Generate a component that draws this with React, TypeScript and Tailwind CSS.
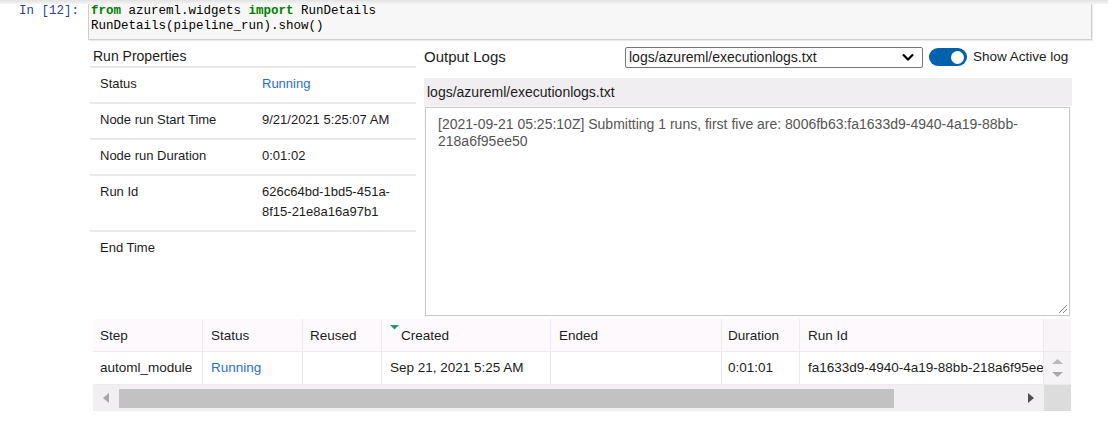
import React from "react";

const cols = [
  { key: "step", w: "w-[110px]", pl: "pl-[7px]" },
  { key: "status", w: "w-[100px]", pl: "pl-[8px]" },
  { key: "reused", w: "w-[79px]", pl: "pl-[7px]" },
  { key: "created", w: "w-[169px]", pl: "pl-[8px]" },
  { key: "ended", w: "w-[171px]", pl: "pl-[8px]" },
  { key: "duration", w: "w-[78px]", pl: "pl-[6px]" },
  { key: "runid", w: "w-[244px]", pl: "pl-[8px]" },
];

function PropRow({ label, children, last }: { label: string; children?: React.ReactNode; last?: boolean }) {
  return (
    <div className={`flex pt-[6px] pb-[8px] leading-[20px] text-[13px] ${last ? "" : "border-b-2 border-[#e9e9e9]"}`}>
      <div className="w-[172px] pl-[10px] shrink-0">{label}</div>
      <div className="flex-1">{children}</div>
    </div>
  );
}

export default function App() {
  return (
    <div className="w-[1108px] h-[436px] bg-white overflow-hidden font-['Liberation_Sans',Arial,sans-serif] text-[#1c1c1c]">
      <div className="h-[4px] bg-linear-to-b from-[#e2e2e2] to-[#f4f4f4]" />
      <div className="flex">
        <div className="w-[88px] shrink-0 pr-[9px] text-right font-['Liberation_Mono','Courier_New',monospace] text-[12.5px] leading-[15px] text-[#303f9f]">
          In [12]:
        </div>
        <div className="flex-1 mr-[16px] h-[36px] bg-[#f7f7f7] border-x border-b border-[#cfcfcf] shadow-[1px_1px_1px_rgba(0,0,0,0.08)] pl-[2px] font-['Liberation_Mono','Courier_New',monospace] text-[12.5px] leading-[15px] text-black">
          <div>
            <span className="text-[#008000] font-bold">from</span> azureml.widgets{" "}
            <span className="text-[#008000] font-bold">import</span> RunDetails
          </div>
          <div>RunDetails(pipeline_run).show()</div>
        </div>
      </div>

      <div className="ml-[90px] w-[982px] mt-[4px]">
        <div className="flex gap-[8px] h-[275px]">
          {/* Left panel */}
          <div className="w-[326px] shrink-0">
            <div className="pt-[2px] leading-[20px] text-[14px] pl-[3px] border-b-2 border-[#e9e9e9]">Run Properties</div>
            <PropRow label="Status">
              <span className="text-[#1f6fde]">Running</span>
            </PropRow>
            <PropRow label="Node run Start Time">9/21/2021 5:25:07 AM</PropRow>
            <PropRow label="Node run Duration">0:01:02</PropRow>
            <PropRow label="Run Id">
              <div>626c64bd-1bd5-451a-</div>
              <div>8f15-21e8a16a97b1</div>
            </PropRow>
            <PropRow label="End Time" last />
          </div>

          {/* Right panel */}
          <div className="w-[648px] shrink-0">
            <div className="h-[26px] flex items-center">
              <div className="w-[201px] shrink-0 text-[15px]">Output Logs</div>
              <div className="w-[298px] h-[21px] border border-[#767676] rounded-[2px] bg-white flex items-center justify-between pl-[3px] pr-[8px] text-[14px]">
                <span>logs/azureml/executionlogs.txt</span>
                <svg width="12" height="8" viewBox="0 0 12 8">
                  <polyline points="1,1.5 6,6.5 11,1.5" fill="none" stroke="#000" strokeWidth="2.2" />
                </svg>
              </div>
              <div className="ml-[6px] w-[38px] h-[18px] rounded-full bg-[#0062ad] flex items-center justify-end pr-[3px]">
                <div className="w-[13px] h-[13px] rounded-full bg-white" />
              </div>
              <div className="ml-[6px] text-[13.5px]">Show Active log</div>
            </div>
            <div className="mt-[8px] h-[28px] bg-[#f0eef0] pl-[3px] leading-[28px] text-[14px]">
              logs/azureml/executionlogs.txt
            </div>
            <div className="mt-[1px] ml-[1px] mr-[2px] h-[209px] border border-[#cacaca] shadow-[0_0_1px_rgba(0,0,0,0.12)] bg-white pl-[12px] pt-[8px] text-[14px] leading-[17px] text-[#555555] flex flex-col">
              <div className="whitespace-nowrap">
                [2021-09-21 05:25:10Z] Submitting 1 runs, first five are: 8006fb63:fa1633d9-4940-4a19-88bb-
              </div>
              <div>218a6f95ee50</div>
              <div className="flex-1" />
              <div className="self-end pr-[1px] pb-[1px]">
                <svg width="11" height="11" viewBox="0 0 11 11">
                  <line x1="10" y1="2" x2="2" y2="10" stroke="#8a8a8a" strokeWidth="1" />
                  <line x1="10" y1="6" x2="6" y2="10" stroke="#8a8a8a" strokeWidth="1" />
                </svg>
              </div>
            </div>
          </div>
        </div>

        {/* Table */}
        <div className="ml-[3px] w-[978px] bg-[#f3f0f3] text-[13.5px]">
          <div className="flex h-[33px] bg-[#fdf9fd] border-b border-[#ede9ed]">
            {cols.map((c, i) => (
              <div key={c.key} className={`${c.w} ${c.pl} shrink-0 border-r border-[#ede9ed] leading-[33px] whitespace-nowrap overflow-hidden flex`}>
                {c.key === "created" ? (
                  <>
                    <div className="self-start mt-[6px] mr-[2px]">
                      <svg width="9" height="5" viewBox="0 0 9 5">
                        <polygon points="0,0 9,0 4.5,4.5" fill="#1b9b6b" />
                      </svg>
                    </div>
                    <span>Created</span>
                  </>
                ) : (
                  <span>{["Step", "Status", "Reused", "Created", "Ended", "Duration", "Run Id"][i]}</span>
                )}
              </div>
            ))}
            <div className="w-[27px] shrink-0 bg-[#f8f4f7]" />
          </div>
          <div className="flex h-[33px] bg-white border-b border-[#ede9ed]">
            {cols.map((c, i) => (
              <div key={c.key} className={`${c.w} ${c.pl} shrink-0 border-r border-[#ede9ed] leading-[32px] whitespace-nowrap overflow-hidden`}>
                {i === 0 && "automl_module"}
                {i === 1 && <span className="text-[#1f6fde]">Running</span>}
                {i === 3 && "Sep 21, 2021 5:25 AM"}
                {i === 5 && "0:01:01"}
                {i === 6 && "fa1633d9-4940-4a19-88bb-218a6f95ee50"}
              </div>
            ))}
            <div className="w-[27px] shrink-0 bg-[#f6f3f6] flex flex-col items-center justify-center gap-[8px]">
              <svg width="11" height="5" viewBox="0 0 11 5">
                <polygon points="0,5 11,5 5.5,0" fill="#b9b9b9" />
              </svg>
              <svg width="11" height="5" viewBox="0 0 11 5">
                <polygon points="0,0 11,0 5.5,5" fill="#a9a9a9" />
              </svg>
            </div>
          </div>
          <div className="flex h-[26px] bg-[#f2eff2]">
            <div className="w-[26px] shrink-0 flex items-center justify-center">
              <svg width="6" height="10" viewBox="0 0 6 10">
                <polygon points="6,0 6,10 0,5" fill="#a6a6a6" />
              </svg>
            </div>
            <div className="w-[775px] shrink-0 h-[19px] mt-[4px] bg-[#c2c2c2]" />
            <div className="w-[124px] shrink-0" />
            <div className="w-[26px] shrink-0 flex items-center justify-center">
              <svg width="6" height="10" viewBox="0 0 6 10">
                <polygon points="0,0 0,10 6,5" fill="#4f4f4f" />
              </svg>
            </div>
            <div className="w-[27px] shrink-0 bg-[#dcdcdc]" />
          </div>
        </div>
      </div>
    </div>
  );
}
